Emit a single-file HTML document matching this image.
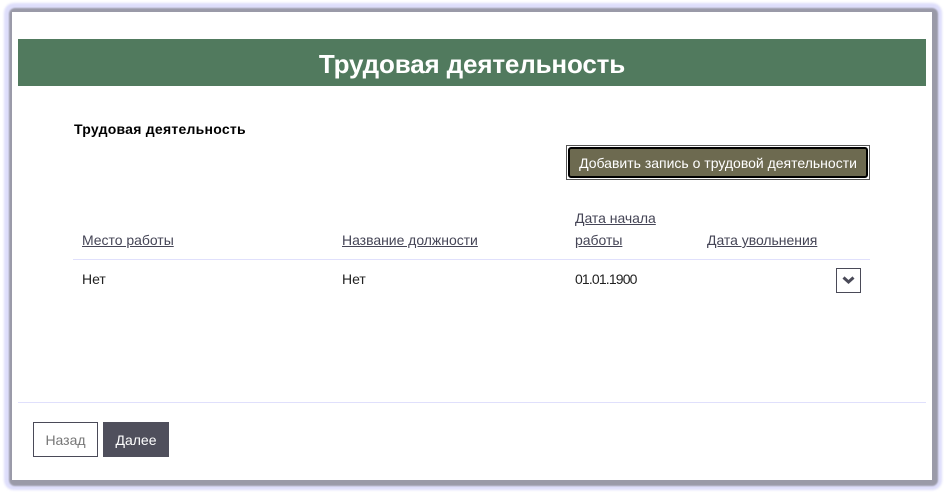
<!DOCTYPE html>
<html lang="ru">
<head>
<meta charset="utf-8">
<title>Трудовая деятельность</title>
<style>
html,body{margin:0;padding:0;background:#fff;}
body{width:945px;height:493px;position:relative;overflow:hidden;font-family:"Liberation Sans",sans-serif;color:#000;}
.a{position:absolute;white-space:nowrap;}
.glow{position:absolute;left:4px;top:3px;width:938px;height:487px;background:#dedefb;border-radius:10px;filter:blur(1px);}
.sh{position:absolute;left:9px;top:8px;width:929px;height:478px;background:#9a9aa8;border-radius:6px;filter:blur(.8px);}
.card{position:absolute;left:12px;top:12px;width:920px;height:468px;background:#fff;}
.banner{position:absolute;left:18px;top:39px;width:908px;height:47px;background:#517a5e;color:#fff;font-weight:bold;font-size:26px;line-height:50px;text-align:center;letter-spacing:-.15px;}
.u{color:#454556;text-decoration:underline;font-size:14px;line-height:22px;letter-spacing:-.03px;}
.t{font-size:14px;line-height:20px;color:#222;}
.line{position:absolute;height:1px;background:#e0e0fc;}
.add{position:absolute;left:566px;top:145px;width:304px;height:35px;box-sizing:border-box;background:#fff;border:1px solid #555;}
.add div{position:absolute;left:1px;top:1px;right:1px;bottom:1px;box-sizing:border-box;border:2px solid #000;border-radius:3px;background:#6d6a50;color:#fff;font-size:14px;line-height:28px;text-align:center;white-space:nowrap;}
.chev{position:absolute;left:836px;top:268px;width:25px;height:25px;box-sizing:border-box;border:1px solid #4a4a58;background:#fff;}
.back{position:absolute;left:33px;top:422px;width:65px;height:35px;box-sizing:border-box;border:1px solid #4a4a58;background:#fff;color:#777;font-size:14px;line-height:35px;text-align:center;}
.next{position:absolute;left:103px;top:422px;width:66px;height:35px;background:#4f4f5c;color:#fff;font-size:14px;line-height:37px;text-align:center;}
</style>
</head>
<body>
<div class="glow"></div>
<div class="sh"></div>
<div class="card"></div>
<div class="banner">Трудовая деятельность</div>
<div class="a" style="left:74px;top:120px;font-size:14px;line-height:18px;font-weight:bold;letter-spacing:.25px;">Трудовая деятельность</div>
<div class="add"><div>Добавить запись о трудовой деятельности</div></div>
<div class="a u" style="left:82px;top:229px;">Место работы</div>
<div class="a u" style="left:342px;top:229px;">Название должности</div>
<div class="a u" style="left:575px;top:207px;">Дата начала</div>
<div class="a u" style="left:575px;top:229px;">работы</div>
<div class="a u" style="left:707px;top:229px;">Дата увольнения</div>
<div class="line" style="left:73px;top:259px;width:797px;"></div>
<div class="a t" style="left:82px;top:269px;">Нет</div>
<div class="a t" style="left:342px;top:269px;">Нет</div>
<div class="a t" style="left:575px;top:269px;letter-spacing:-.85px;">01.01.1900</div>
<div class="chev"><svg width="23" height="23" viewBox="0 0 23 23" style="display:block"><path d="M6.5 8.5 L11.5 13 L16.5 8.5" fill="none" stroke="#4a4a58" stroke-width="3"/></svg></div>
<div class="line" style="left:18px;top:402px;width:908px;"></div>
<div class="back">Назад</div>
<div class="next">Далее</div>
</body>
</html>
